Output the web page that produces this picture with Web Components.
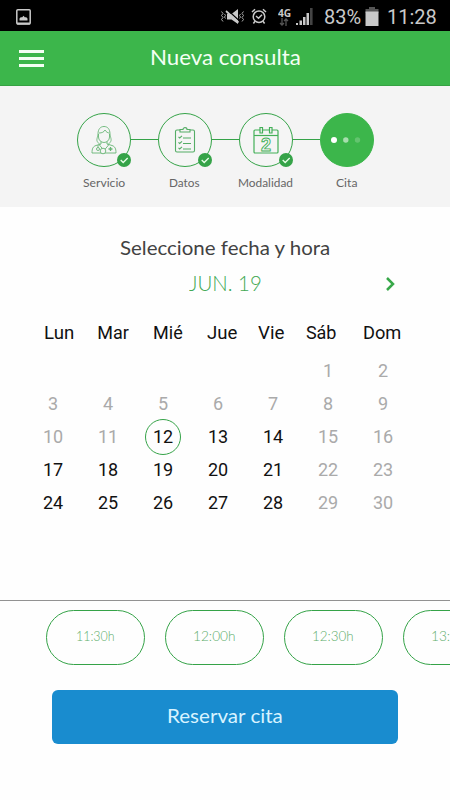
<!DOCTYPE html>
<html lang="es">
<head>
<meta charset="utf-8">
<title>Nueva consulta</title>
<style>
  html, body { margin: 0; height: 100%; background: #fefefe; overflow: hidden; }
  body { --green: #3cb64b; --outline: #35a348; font-family: Lato, "Liberation Sans", sans-serif; }
</style>
</head>
<body>
<booking-app></booking-app>

<script>
class FitText extends HTMLElement {
  // Text scaled horizontally to a fixed measure
  connectedCallback() {
    this.attachShadow({ mode: 'open' });
    const width = Number(this.getAttribute('width'));
    this.shadowRoot.innerHTML = `
      <style>
        :host { display: inline-block; width: ${width}px; white-space: nowrap; text-align: left; }
        span { display: inline-block; transform-origin: 0 50%; }
      </style>
      <span><slot></slot></span>
    `;
    const span = this.shadowRoot.querySelector('span');
    span.style.transform = `scaleX(${width / span.offsetWidth})`;
  }
}

class StatusBar extends HTMLElement {
  constructor() {
    super();
    this.attachShadow({ mode: 'open' });
    this.shadowRoot.innerHTML = `
      <style>
        :host {
          display: flex;
          align-items: center;
          height: 31px;
          box-sizing: border-box;
          padding: 2px 13px 0 16px;
          background: #000;
          color: #c9c9c9;
          font: 20px/28px Roboto, sans-serif;
        }
        svg { display: block; flex: none; }
        .push { flex: 1; }
        .network {
          display: flex;
          flex-direction: column;
          align-items: center;
          width: 14px;
          margin: 0 5px 0 10px;
          font: bold 11px/10px "Open Sans", sans-serif;
        }
      </style>
      <svg width="15" height="16" viewBox="0 0 15 16">
        <rect x=".8" y=".8" width="13.4" height="14.2" rx="1" fill="none" stroke="#c9c9c9" stroke-width="1.5"/>
        <path d="M3.500 11.500V9.500l1.500-1.500 1 .5 1.500-1.700L9 8.500l1-.5 1.500 1.500v2z" fill="#c9c9c9"/>
        <path d="M1 14.500h13" stroke="#c9c9c9" stroke-width="2"/>
      </svg>
      <div class="push"></div>
      <svg width="25" height="17" viewBox="0 0 25 17" fill="none" stroke="#a8a8a8" stroke-width="1">
        <path d="M1.500 3.500L3 5.500l-1.500 2L3 9.500l-1.500 2L3 13.500M4.500 6l1 1.500-1 1.500 1 1.500M23.500 3.500L22 5.500l1.500 2-1.500 2 1.500 2-1.500 2M20.500 6l-1 1.500 1 1.500-1 1.500"/>
        <path d="M7 6h4.500L18 1v15l-6.500-4.500H7z" fill="#c9c9c9" stroke="none"/>
        <path d="M7.500 2L19 12.500" stroke="#000" stroke-width="1.200"/>
        <path d="M6 3l12.500 11.500" stroke="#c9c9c9" stroke-width="1.700"/>
      </svg>
      <svg style="margin-left:6px" width="16" height="17" viewBox="0 0 16 17" fill="none" stroke="#c9c9c9" stroke-width="1.5">
        <circle cx="8" cy="8.7" r="5.8"/>
        <path d="M5 8l2.500 2.200L11 6.700M1 4l3-2.800M15 4l-3-2.800M4 13.300l-1.600 2.200M12 13.300l1.600 2.200"/>
      </svg>
      <div class="network">
        <fit-text width="13">4G</fit-text>
        <svg width="10" height="8" viewBox="0 0 10 8" fill="none" stroke="#555" stroke-width="1.3">
          <path d="M3 0v7M1 5l2 2 2-2M7 8V1M5 3l2-2 2 2"/>
        </svg>
      </div>
      <svg width="17" height="17" viewBox="0 0 17 17" fill="#c9c9c9">
        <path d="M0 15h2v2H0zM3.500 12.500H6V17H3.500zM7 9h2.500v8H7zM10.500 5H13v12h-2.500z"/>
        <path d="M14 0h2.600v17H14z" fill="#444"/>
      </svg>
      <fit-text style="margin-left:11px" width="37">83%</fit-text>
      <svg style="margin-left:4px" width="14" height="19" viewBox="0 0 14 19">
        <path d="M4 0h6v2h3.500v4H.5V2H4z" fill="#555"/>
        <path d="M.5 4.500h13V19H.5z" fill="#c9c9c9"/>
      </svg>
      <fit-text style="margin-left:8px" width="50">11:28</fit-text>
    `;
  }
}

class AppHeader extends HTMLElement {
  constructor() {
    super();
    this.attachShadow({ mode: 'open' });
    this.shadowRoot.innerHTML = `
      <style>
        :host {
          display: grid;
          grid-template-columns: 44px 1fr 44px;
          align-items: center;
          height: 55px;
          box-sizing: border-box;
          border-bottom: 1px solid #36a243;
          background: var(--green);
          color: #f4fff4;
          font-size: 22px;
          line-height: 30px;
        }
        .menu {
          display: flex;
          flex-direction: column;
          gap: 4px;
          width: 25px;
          margin: 1px 0 0 19px;
        }
        .menu i { height: 3px; background: #f4fff4; }
        .title { text-align: center; margin-top: -2px; }
      </style>
      <div class="menu"><i></i><i></i><i></i></div>
      <div class="title"><slot></slot></div>
    `;
  }
}

const STEP_ICONS = {
  doctor: `
    <svg width="28" height="30" viewBox="0 0 28 30" fill="none" stroke="#68b675" stroke-width=".9">
      <path d="M8 17.500C5.500 15 8 12 8 9c0-5 2.500-7.500 6-7.500S20 4 20 9c0 3 2.500 6 0 8.500M9 8c3 0 5-1 6-3 1 2 3 3 4.500 3M8.500 9v3c0 3 2.500 5.500 5.500 5.500s5.500-2.500 5.500-5.500V9"/>
      <path d="M11 16.500V19l-5 1.500c-3 1-4 3-4 7.500h24c0-4.500-1-6.500-4-7.500L17 19v-2.500M8 17.500l2 2M20 17.500l-2 2M9 19.500l5 6 5-6M8 20v2.500"/>
      <circle cx="8" cy="24" r="1.500"/>
      <circle cx="13" cy="26" r="2.800" fill="#f4f4f4"/>
      <path d="M20.500 22v4M18.500 24h4" stroke-width="1.300"/>
    </svg>`,
  list: `
    <svg width="22" height="26" viewBox="0 0 22 26" fill="none" stroke="#55ad66" stroke-width="1.100">
      <rect x="1.500" y="3" width="19" height="22" rx="1.500"/>
      <path d="M6 2.500h3c0-2.500 4-2.500 4 0h3V5H6z" fill="#f4f4f4"/>
      <path d="M9 11h8M9 16.500h8M9 22h8"/>
      <path d="M4.500 9.800l1.200 1.200L8 8.800M4.500 15.300l1.200 1.200L8 14.300M4.500 20.800L5.700 22 8 19.800"/>
    </svg>`,
  calendar: `
    <svg width="26" height="28" viewBox="0 0 26 28" fill="none" stroke="#43b058" stroke-width="1.200">
      <rect x="1" y="4" width="24" height="23" rx="1"/>
      <path d="M1 9.500h24"/>
      <path d="M7 1.500h2.500v5.500H7zM16.500 1.500H19v5.500h-2.500z" fill="#f4f4f4"/>
      <text x="13" y="24.500" text-anchor="middle" font-family="Liberation Sans, sans-serif" font-weight="bold" font-size="18" stroke-width=".9">2</text>
    </svg>`,
  dots: `
    <svg width="34" height="8" viewBox="0 0 34 8" fill="#fff">
      <circle cx="4" cy="4" r="3"/>
      <circle cx="15.800" cy="4" r="2.700" opacity=".55"/>
      <circle cx="27.500" cy="4" r="2.700" opacity=".2"/>
    </svg>`
};

class ProgressStep extends HTMLElement {
  connectedCallback() {
    this.attachShadow({ mode: 'open' });
    const done = this.hasAttribute('done');
    this.shadowRoot.innerHTML = `
      <style>
        :host {
          display: flex;
          flex-direction: column;
          align-items: center;
          width: 54px;
          color: #666;
          font-size: 11px;
          line-height: 16px;
        }
        .circle {
          position: relative;
          display: flex;
          align-items: center;
          justify-content: center;
          width: 54px;
          height: 54px;
          box-sizing: border-box;
          border: 1px solid var(--outline);
          border-radius: 50%;
          margin-bottom: 8px;
          background: #f5f5f5;
        }
        :host(:not([done])) .circle { background: var(--green); border-color: var(--green); }
        .badge { position: absolute; right: -1px; bottom: -1px; }
        svg { display: block; }
      </style>
      <div class="circle">
        ${STEP_ICONS[this.getAttribute('icon')]}
        ${done ? `
          <svg class="badge" width="14" height="14" viewBox="0 0 14 14">
            <circle cx="7" cy="7" r="7" fill="var(--outline)"/>
            <path d="M3.700 7l2.500 2.500L10.700 5" fill="none" stroke="#e9ffe9" stroke-width="1.300"/>
          </svg>` : ''}
      </div>
      <slot></slot>
    `;
  }
}

class ProgressSteps extends HTMLElement {
  constructor() {
    super();
    this.attachShadow({ mode: 'open' });
    this.shadowRoot.innerHTML = `
      <style>
        :host {
          display: flex;
          height: 121px;
          box-sizing: border-box;
          padding: 27px 0 0 76.5px;
          background: #f4f4f4;
        }
        .line { width: 27px; height: 1px; margin-top: 26px; background: var(--outline); }
      </style>
      <progress-step done icon="doctor"><fit-text width="42">Servicio</fit-text></progress-step>
      <div class="line"></div>
      <progress-step done icon="list"><fit-text width="31">Datos</fit-text></progress-step>
      <div class="line"></div>
      <progress-step done icon="calendar"><fit-text width="55">Modalidad</fit-text></progress-step>
      <div class="line"></div>
      <progress-step icon="dots"><fit-text width="21">Cita</fit-text></progress-step>
    `;
  }
}

class MonthCalendar extends HTMLElement {
  constructor() {
    super();
    this.attachShadow({ mode: 'open' });
    // June 2019 starts on a Saturday
    const blanks = 5;
    const today = 12;
    let days = '';
    for (let day = 1; day <= 30; day++) {
      const column = (day + blanks - 1) % 7;
      const off = day < today || column > 4;
      const start = day === 1 ? ` style="grid-column-start:${blanks + 1}"` : '';
      days += `<span class="${off ? 'off' : ''}${day === today ? 'today' : ''}"${start}><b>${day}</b></span>`;
    }
    this.shadowRoot.innerHTML = `
      <style>
        :host { display: block; color: #111; font: 18px/22px Roboto, sans-serif; }
        .week { display: flex; padding-left: 43.5px; }
        .week span { margin-right: 23.8px; }
        .week .narrow { margin-right: 21.5px; }
        .week .wide { margin-right: 26.5px; }
        .days {
          display: grid;
          grid-template-columns: repeat(7, 55px);
          grid-auto-rows: 33px;
          margin: 10px 0 0 25.5px;
        }
        .days span { display: flex; align-items: center; justify-content: center; }
        b { font-weight: 400; letter-spacing: -.1px; }
        .off { color: #aaa; }
        .today b {
          flex: none;
          width: 34px;
          height: 34px;
          line-height: 34px;
          text-align: center;
          border: 1px solid var(--outline);
          border-radius: 50%;
        }
      </style>
      <div class="week">
        <span><fit-text width="30">Lun</fit-text></span>
        <span><fit-text width="32">Mar</fit-text></span>
        <span><fit-text width="30">Mié</fit-text></span>
        <span class="narrow"><fit-text width="30">Jue</fit-text></span>
        <span class="narrow"><fit-text width="26">Vie</fit-text></span>
        <span class="wide"><fit-text width="31">Sáb</fit-text></span>
        <span><fit-text width="38.5">Dom</fit-text></span>
      </div>
      <div class="days">${days}</div>
    `;
  }
}

class TimeSlot extends HTMLElement {
  constructor() {
    super();
    this.attachShadow({ mode: 'open' });
    this.shadowRoot.innerHTML = `
      <style>
        :host {
          display: flex;
          flex: none;
          align-items: center;
          justify-content: center;
          width: 99px;
          height: 55px;
          box-sizing: border-box;
          border: 1px solid var(--outline);
          border-radius: 28px;
          padding-bottom: 4px;
          color: #5fae6d;
          font-size: 14px;
          font-weight: 300;
        }
      </style>
      <slot></slot>
    `;
  }
}

class BookingApp extends HTMLElement {
  constructor() {
    super();
    this.attachShadow({ mode: 'open' });
    this.shadowRoot.innerHTML = `
      <style>
        :host { display: flex; flex-direction: column; width: 450px; height: 800px; overflow: hidden; }
        h2 {
          margin: 27px 0 0;
          color: #424242;
          font-size: 19px;
          font-weight: 400;
          line-height: 28px;
          text-align: center;
        }
        .month {
          display: grid;
          grid-template-columns: 67px 1fr 67px;
          align-items: center;
          justify-items: center;
          height: 28px;
          margin: 6px 0 26px;
          color: #42a953;
          font-size: 21px;
          font-weight: 300;
        }
        .month svg { display: block; justify-self: start; margin: 4px 0 0 2px; }
        .slots {
          display: flex;
          gap: 20px;
          margin-top: 81px;
          padding: 9px 0 0 45.5px;
          border-top: 1px solid #929292;
          overflow: hidden;
        }
        button {
          width: 346px;
          height: 54px;
          margin: 25px 0 0 52px;
          border: 0;
          border-radius: 6px;
          padding: 0 0 3px;
          background: #198ccf;
          color: #d8f3ff;
          font-family: inherit;
          font-size: 19px;
        }
      </style>
      <status-bar></status-bar>
      <app-header><fit-text width="151">Nueva consulta</fit-text></app-header>
      <progress-steps></progress-steps>
      <h2><fit-text width="210">Seleccione fecha y hora</fit-text></h2>
      <div class="month">
        <span></span>
        <fit-text width="73">JUN. 19</fit-text>
        <svg width="12" height="16" viewBox="0 0 12 16" fill="none" stroke="#38a849" stroke-width="2.500"><path d="M2 2l6 6-6 6"/></svg>
      </div>
      <month-calendar></month-calendar>
      <div class="slots">
        <time-slot><fit-text width="39">11:30h</fit-text></time-slot>
        <time-slot><fit-text width="43">12:00h</fit-text></time-slot>
        <time-slot><fit-text width="42">12:30h</fit-text></time-slot>
        <time-slot><fit-text width="43">13:00h</fit-text></time-slot>
      </div>
      <button><fit-text width="116">Reservar cita</fit-text></button>
    `;
  }
}

customElements.define('fit-text', FitText);
customElements.define('status-bar', StatusBar);
customElements.define('app-header', AppHeader);
customElements.define('progress-step', ProgressStep);
customElements.define('progress-steps', ProgressSteps);
customElements.define('month-calendar', MonthCalendar);
customElements.define('time-slot', TimeSlot);
customElements.define('booking-app', BookingApp);
</script>
</body>
</html>
